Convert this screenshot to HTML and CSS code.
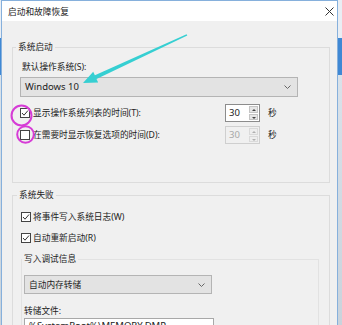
FILE: index.html
```html
<!DOCTYPE html>
<html lang="zh-CN">
<head>
    <meta charset="UTF-8">
    <title>启动和故障恢复</title>
    <link rel="stylesheet" href="styles.css">
</head>
<body>
    <div class="window">
        <div class="titlebar">
            <span class="title">启动和故障恢复</span>
            <svg class="close" width="9" height="9" viewBox="0 0 9 9">
                <path d="M0.5 0.5 L8.5 8.5 M8.5 0.5 L0.5 8.5" stroke="#333" stroke-width="1" fill="none"/>
            </svg>
        </div>

        <div class="content">
            <fieldset class="group group-start">
                <legend>系统启动</legend>
                <div class="field-label">默认操作系统(S):</div>
                <div class="combo combo-os">
                    <span>Windows 10</span>
                    <svg class="chev" width="7" height="4" viewBox="0 0 7 4"><path d="M0.5 0.5 L3.5 3.5 L6.5 0.5" stroke="#666" fill="none"/></svg>
                </div>

                <div class="opt-row">
                    <label class="check">
                        <span class="box"><svg width="8" height="8" viewBox="0 0 8 8"><path d="M1 4 L3 6.2 L7 1.5" stroke="#333" stroke-width="1" fill="none"/></svg></span>
                        <span>显示操作系统列表的时间(T):</span>
                    </label>
                    <div class="spin">
                        <span class="spin-val">30</span>
                        <span class="spin-btns"><i class="up"></i><i class="down"></i></span>
                    </div>
                    <span class="unit">秒</span>
                </div>
                <div class="opt-row">
                    <label class="check">
                        <span class="box"></span>
                        <span>在需要时显示恢复选项的时间(D):</span>
                    </label>
                    <div class="spin disabled">
                        <span class="spin-val">30</span>
                        <span class="spin-btns"><i class="up"></i><i class="down"></i></span>
                    </div>
                    <span class="unit">秒</span>
                </div>
            </fieldset>

            <fieldset class="group group-fail">
                <legend>系统失败</legend>
                <div class="check-row">
                    <span class="box"><svg width="8" height="8" viewBox="0 0 8 8"><path d="M1 4 L3 6.2 L7 1.5" stroke="#333" stroke-width="1" fill="none"/></svg></span>
                    <span>将事件写入系统日志(W)</span>
                </div>
                <div class="check-row">
                    <span class="box"><svg width="8" height="8" viewBox="0 0 8 8"><path d="M1 4 L3 6.2 L7 1.5" stroke="#333" stroke-width="1" fill="none"/></svg></span>
                    <span>自动重新启动(R)</span>
                </div>

                <fieldset class="group group-debug">
                    <legend>写入调试信息</legend>
                    <div class="combo combo-dump">
                        <span>自动内存转储</span>
                        <svg class="chev" width="7" height="4" viewBox="0 0 7 4"><path d="M0.5 0.5 L3.5 3.5 L6.5 0.5" stroke="#666" fill="none"/></svg>
                    </div>
                    <div class="field-label dump-label">转储文件:</div>
                    <div class="textbox">%SystemRoot%\MEMORY.DMP</div>
                </fieldset>
            </fieldset>
        </div>
    </div>

    <!-- annotations drawn over the dialog -->
    <svg class="marks" width="342" height="325" viewBox="0 0 342 325">
        <polygon points="186.6,34.3 94.9,75.3 93.2,71.7 83,83 98.2,82.5 96.5,78.9 187.3,35.6" fill="#36cfd2"/>
        <circle cx="21.5" cy="115.5" r="10" stroke="#d63cd6" stroke-width="2" fill="none"/>
        <circle cx="25.5" cy="134.5" r="8.3" stroke="#d63cd6" stroke-width="2" fill="none"/>
    </svg>
</body>
</html>
```

FILE: styles.css
```css
body {
    margin: 0;
    width: 342px;
    height: 325px;
    overflow: hidden;
    position: relative;
    font-family: "Noto Sans", "Noto Sans CJK SC", sans-serif;
    font-size: 8.7px;
    line-height: 12px;
    color: #222;
    background: linear-gradient(#e9eef4 0, #e9eef4 38px, #3f88d4 38px, #3f88d4 75px, #d9e2ea 75px, #c9d3dc 100%);
}
.window {
    width: 337px;
    height: 325px;
    overflow: hidden;
    box-sizing: border-box;
    margin-left: 1px;
    border: 1px solid #86b0dc;
    border-bottom: none;
    background: #f0f0f0;
}
.titlebar {
    height: 20px;
    background: #fff;
    display: flex;
    align-items: center;
    justify-content: space-between;
    padding: 0 3px 0 6px;
}
.title {
    padding-top: 2px;
}
.content {
    padding: 20px 7px 0 10px;
}
.group {
    margin: 0;
    padding: 8px 0 0 7px;
    border: 1px solid #dcdcdc;
    min-width: 0;
}
.group legend {
    padding: 0 2px;
    margin-left: -4px;
    line-height: 12px;
}
.group-start {
    padding-bottom: 38px;
}
.group-fail {
    margin-top: 6px;
    padding: 7px 10px 0 8px;
    border-bottom: none;
    height: 140px;
}
.group-debug {
    margin-top: 6px;
    padding: 10px 0 0 2px;
    border-color: #e2e2e2;
    border-bottom: none;
    height: 80px;
}
.group-debug legend {
    margin-left: -2px;
}
.field-label {
    padding-left: 2px;
}
.combo {
    display: flex;
    align-items: center;
    justify-content: space-between;
    box-sizing: border-box;
    background: #e3e3e3;
    border: 1px solid #b4b4b4;
    padding: 0 6px 0 4px;
}
.combo-os {
    width: 278px;
    height: 20px;
    margin-top: 4px;
    font-size: 9.5px;
}
.combo-dump {
    width: 188px;
    height: 19px;
}
.dump-label {
    margin-top: 11px;
    padding-left: 0;
}
.textbox {
    width: 190px;
    height: 19px;
    box-sizing: border-box;
    margin-top: 1px;
    background: #fff;
    border: 1px solid #a8a8a8;
    padding: 1px 4px 0;
    font-size: 9.5px;
}
.opt-row {
    display: flex;
    align-items: center;
    height: 18px;
    margin-top: 4px;
}
.group-start .combo + .opt-row {
    margin-top: 7px;
}
.check {
    width: 205px;
    display: flex;
    align-items: center;
    gap: 3px;
}
.check-row {
    display: flex;
    align-items: center;
    gap: 2px;
    height: 18px;
    margin-bottom: 3px;
}
.box {
    width: 10px;
    height: 10px;
    box-sizing: border-box;
    border: 1px solid #444;
    background: #fff;
    display: flex;
    align-items: center;
    justify-content: center;
}
.spin {
    width: 35px;
    height: 18px;
    box-sizing: border-box;
    background: #fff;
    border: 1px solid #8c8c8c;
    display: flex;
    justify-content: space-between;
    font-size: 9.5px;
}
.spin-val {
    padding: 2px 0 0 3px;
}
.spin-btns {
    width: 9px;
    display: flex;
    flex-direction: column;
    gap: 1px;
    padding: 1px 1px 1px 0;
}
.spin-btns i {
    flex: 1;
    background: #e6e6e6;
    border: 1px solid #c4c4c4;
    position: relative;
}
.spin-btns i::after {
    content: "";
    position: absolute;
    left: 2px;
    border-left: 2px solid transparent;
    border-right: 2px solid transparent;
}
.spin-btns .up::after {
    top: 2px;
    border-bottom: 2px solid #444;
}
.spin-btns .down::after {
    top: 2px;
    border-top: 2px solid #444;
}
.spin.disabled {
    background: #f0f0f0;
    border-color: #cfcfcf;
    color: #a8a8a8;
}
.spin.disabled .spin-btns i {
    border-color: #dadada;
    background: #eeeeee;
}
.spin.disabled .spin-btns .up::after {
    border-bottom-color: #b0b0b0;
}
.spin.disabled .spin-btns .down::after {
    border-top-color: #b0b0b0;
}
.unit {
    margin-left: 8px;
}
.marks {
    position: absolute;
    left: 0;
    top: 0;
    pointer-events: none;
}
```
